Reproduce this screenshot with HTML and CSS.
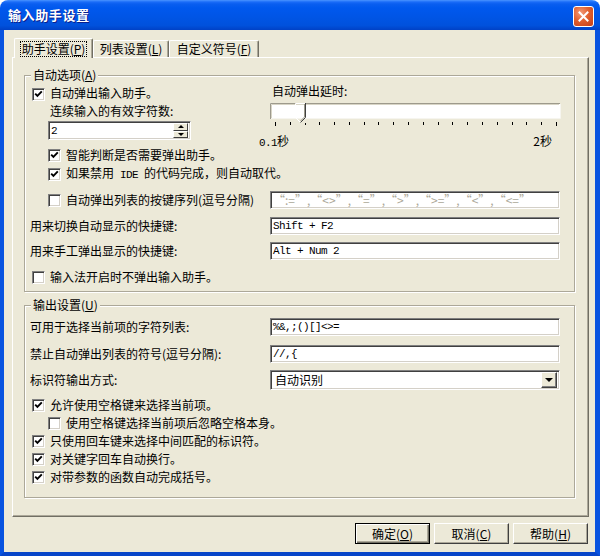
FILE: index.html
```html
<!DOCTYPE html>
<html lang="zh-CN">
<head>
<meta charset="utf-8">
<title>输入助手设置</title>
<link rel="stylesheet" href="styles.css">
</head>
<body>
<div class="window">
  <div class="titlebar">
    <span class="title">输入助手设置</span>
    <span class="close"><svg width="11" height="11" viewBox="0 0 11 11"><path d="M1.5 1.5 L9.5 9.5 M9.5 1.5 L1.5 9.5" stroke="#fff" stroke-width="2" stroke-linecap="square"/></svg></span>
  </div>
  <div class="frame">
    <div class="tabs">
      <div class="tab tab1 active"><span class="focus">助手设置(<u>P</u>)</span></div>
      <div class="tab tab2">列表设置(<u>L</u>)</div>
      <div class="tab tab3">自定义符号(<u>F</u>)</div>
    </div>
    <div class="panel">
      <div class="group g1">
        <div class="legend">自动选项(<u>A</u>)</div>
        <div class="grid block1">
          <div class="col colleft">
            <div class="cbrow lvl1 first"><span class="cb"><svg class="chk" viewBox="0 0 9 9"><path d="M1.2 3.6 L3.4 5.9 L7.8 1.4"/></svg></span><span class="txt">自动弹出输入助手。</span></div>
            <div class="lbl sub">连续输入的有效字符数:</div>
            <div class="field spin"><span class="mono">2</span><span class="spinbtn"><span class="half"><i class="tri up"></i></span><span class="half"><i class="tri down"></i></span></span></div>
          </div>
          <div class="col">
            <div class="lbl delay">自动弹出延时:</div>
            <svg class="slider" width="291" height="26" viewBox="0 0 291 26">
              <rect x="0" y="1" width="290" height="16" fill="#fff"/>
              <path d="M0.5 17 V1.5 H290" stroke="#9d9a8c" fill="none"/>
              <path d="M1.5 16 V2.5 H289" stroke="#d8d5c6" fill="none"/>
              <path d="M1 16.5 H290.5 V2" stroke="#f6f5ef" fill="none"/>
              <path d="M25.5 15.5 V1.5 H35" stroke="#ffffff" fill="none"/>
              <path d="M25.5 15.5 L30.5 20.5" stroke="#ffffff" fill="none"/>
              <path d="M35.5 1 V15.5 L30.5 20.5" stroke="#404040" fill="none"/>
              <path d="M34.5 2 V15 L30.5 19" stroke="#9d9a8c" fill="none"/>
              <path d="M5.5 20 v4 M20.5 20 v3 M35.5 21 v2 M49.5 20 v3 M64.5 20 v3 M79.5 20 v3 M94.5 20 v3 M108.5 20 v3 M123.5 20 v3 M138.5 20 v3 M153.5 20 v3 M168.5 20 v3 M182.5 20 v3 M197.5 20 v3 M212.5 20 v3 M227.5 20 v3 M242.5 20 v3 M256.5 20 v3 M271.5 20 v3 M286.5 20 v4" stroke="#000" fill="none"/>
            </svg>
            <div class="sliderlabels"><span><span class="mono">0.1</span>秒</span><span>2秒</span></div>
          </div>
        </div>
        <div class="cbrow lvl2 r-smart"><span class="cb"><svg class="chk" viewBox="0 0 9 9"><path d="M1.2 3.6 L3.4 5.9 L7.8 1.4"/></svg></span><span>智能判断是否需要弹出助手。</span></div>
        <div class="cbrow lvl2 r-ide"><span class="cb"><svg class="chk" viewBox="0 0 9 9"><path d="M1.2 3.6 L3.4 5.9 L7.8 1.4"/></svg></span><span>如果禁用<span class="mono"> IDE </span>的代码完成，则自动取代。</span></div>
        <div class="grid row r-keys">
          <div class="cbrow lvl2"><span class="cb"></span><span>自动弹出列表的按键序列(逗号分隔)</span></div>
          <div class="field dis">“:=”,“&lt;&gt;”,“=”,“&gt;”,“&gt;=”,“&lt;”,“&lt;=”</div>
        </div>
        <div class="grid row r-sw">
          <div class="lbl lead">用来切换自动显示的快捷键:</div>
          <div class="field"><span class="mono">Shift + F2</span></div>
        </div>
        <div class="grid row r-man">
          <div class="lbl lead">用来手工弹出显示的快捷键:</div>
          <div class="field"><span class="mono">Alt + Num 2</span></div>
        </div>
        <div class="cbrow lvl1 r-ime"><span class="cb"></span><span>输入法开启时不弹出输入助手。</span></div>
      </div>

      <div class="group g2">
        <div class="legend">输出设置(<u>U</u>)</div>
        <div class="grid row r-a">
          <div class="lbl lead">可用于选择当前项的字符列表:</div>
          <div class="field"><span class="mono">%&amp;,;()[]&lt;&gt;=</span></div>
        </div>
        <div class="grid row r-b">
          <div class="lbl lead">禁止自动弹出列表的符号(逗号分隔):</div>
          <div class="field"><span class="mono">//,{</span></div>
        </div>
        <div class="grid row r-c">
          <div class="lbl lead">标识符输出方式:</div>
          <div class="field combo"><span class="combotext">自动识别</span><span class="ddbtn"><i class="tri down big"></i></span></div>
        </div>
        <div class="cblist">
          <div class="cbrow tall lvl1"><span class="cb"><svg class="chk" viewBox="0 0 9 9"><path d="M1.2 3.6 L3.4 5.9 L7.8 1.4"/></svg></span><span>允许使用空格键来选择当前项。</span></div>
          <div class="cbrow tall lvl2"><span class="cb"></span><span>使用空格键选择当前项后忽略空格本身。</span></div>
          <div class="cbrow tall lvl1"><span class="cb"><svg class="chk" viewBox="0 0 9 9"><path d="M1.2 3.6 L3.4 5.9 L7.8 1.4"/></svg></span><span>只使用回车键来选择中间匹配的标识符。</span></div>
          <div class="cbrow tall lvl1"><span class="cb"><svg class="chk" viewBox="0 0 9 9"><path d="M1.2 3.6 L3.4 5.9 L7.8 1.4"/></svg></span><span>对关键字回车自动换行。</span></div>
          <div class="cbrow tall lvl1"><span class="cb"><svg class="chk" viewBox="0 0 9 9"><path d="M1.2 3.6 L3.4 5.9 L7.8 1.4"/></svg></span><span>对带参数的函数自动完成括号。</span></div>
        </div>
      </div>
    </div>
    <div class="buttons">
      <div class="btn default">确定(<u>O</u>)</div>
      <div class="btn">取消(<u>C</u>)</div>
      <div class="btn">帮助(<u>H</u>)</div>
    </div>
  </div>
</div>
</body>
</html>
```

FILE: styles.css
```css
* { box-sizing: border-box; }
html, body { margin: 0; padding: 0; }
body {
  background: #ffffff;
  font-family: "Noto Sans CJK SC", "Noto Sans CJK JP", sans-serif;
  font-size: 12px;
  color: #000;
}
u { text-decoration: underline; text-underline-offset: 1px; }

.window { width: 600px; height: 556px; display: flex; flex-direction: column; }

.titlebar {
  height: 30px;
  flex: none;
  border-radius: 8px 8px 0 0;
  background: linear-gradient(#4a94ff 0, #1a6cf8 2px, #0a5ef0 4px, #0058ee 8px, #0055e6 55%, #0051dc 85%, #0041c6 100%);
  display: flex;
  align-items: center;
  justify-content: space-between;
  padding: 0 6px 0 8px;
}
.title {
  color: #fff;
  font-weight: 700;
  font-size: 13px;
  letter-spacing: 0.6px;
  line-height: 16px;
  text-shadow: 1px 1px 0 #0a1e8c;
}
.close {
  width: 21px;
  height: 21px;
  margin-top: 3px;
  border: 1px solid #fff;
  border-radius: 3px;
  background: radial-gradient(circle at 35% 30%, #f29a78 0, #e1602f 45%, #c43d16 100%);
  display: flex;
  align-items: center;
  justify-content: center;
}

.frame {
  flex: 1;
  background: #ece9d8;
  border-left: 4px solid #0853e0;
  border-right: 5px solid #0853e0;
  border-bottom: 4px solid #0745c9;
  display: flex;
  flex-direction: column;
}

.tabs {
  height: 27px;
  flex: none;
  display: flex;
  align-items: flex-end;
  padding-left: 10px;
}
.tab {
  height: 17px;
  border-top: 1px solid #fff;
  border-left: 1px solid #fff;
  border-right: 1px solid #716f64;
  box-shadow: inset -1px 0 0 #aca899;
  border-radius: 2px 2px 0 0;
  display: flex;
  align-items: center;
  justify-content: center;
  line-height: 14px;
  white-space: nowrap;
  background: #ece9d8;
}
.tab1 { width: 79px; }
.tab2 { width: 76px; }
.tab3 { width: 90px; }
.tab.active {
  height: 20px;
  margin-bottom: -1px;
  position: relative;
  z-index: 1;
}
.focus { outline: 1px dotted #000; padding: 0 1px; line-height: 14px; }

.panel {
  flex: none;
  margin-left: 8px;
  width: 577px;
  height: 460px;
  border: 1px solid;
  border-color: #fff #716f64 #716f64 #fff;
  box-shadow: inset -1px -1px 0 #aca899;
  padding-top: 17px;
}

.group {
  position: relative;
  margin-left: 11px;
  width: 551px;
  border: 1px solid #aca899;
  box-shadow: inset 1px 1px 0 #fff, 1px 1px 0 #fff;
}
.g1 { height: 217px; }
.g2 { height: 193px; margin-top: 13px; }
.legend {
  position: absolute;
  top: -8px;
  left: 6px;
  padding: 0 2px;
  background: #ece9d8;
  line-height: 14px;
  white-space: nowrap;
}

.grid { display: grid; grid-template-columns: 245px 290px; align-items: center; }
.block1 { margin-top: 8px; align-items: start; }
.colleft { padding-top: 3px; }

.lbl { height: 14px; line-height: 14px; white-space: nowrap; }
.sub { padding-left: 25px; height: 19px; line-height: 19px; }
.lead { padding-left: 5px; }
.delay { padding-left: 2px; }

.cbrow { display: flex; align-items: center; height: 14px; line-height: 14px; white-space: nowrap; }
.cbrow.tall { height: 18px; }
.cbrow.first { align-items: flex-start; }
.cbrow.first .cb { margin-top: 1px; }
.cbrow.first .txt { line-height: 12px; }
.lvl1 { padding-left: 7px; }
.lvl2 { padding-left: 23px; }
.cb {
  flex: none;
  width: 13px;
  height: 13px;
  margin-right: 5px;
  background: #fff;
  border: 1px solid;
  border-color: #808080 #fff #fff #808080;
  box-shadow: inset 1px 1px 0 #404040, inset -1px -1px 0 #d4d0c8;
  display: flex;
  align-items: center;
  justify-content: center;
}
.chk { width: 9px; height: 9px; display: block; }
.chk path { fill: none; stroke: #000; stroke-width: 1.9; }

.field {
  height: 18px;
  background: #fff;
  border: 1px solid;
  border-color: #808080 #fff #fff #808080;
  box-shadow: inset 1px 1px 0 #404040, inset -1px -1px 0 #d4d0c8;
  padding: 0 2px;
  display: flex;
  align-items: center;
  white-space: nowrap;
  overflow: hidden;
  line-height: 14px;
}
.dis { color: #aca899; }
.mono { font-family: "Liberation Mono", "DejaVu Sans Mono", monospace; font-size: 11px; letter-spacing: -0.6px; }

.spin {
  margin-top: 1px;
  margin-left: 23px;
  width: 143px;
  height: 19px;
  justify-content: space-between;
  padding: 2px 2px 2px 2px;
}
.spinbtn { width: 15px; height: 15px; display: flex; flex-direction: column; }
.half {
  flex: 1;
  background: #ece9d8;
  border: 1px solid;
  border-color: #fff #404040 #404040 #fff;
  display: flex;
  align-items: center;
  justify-content: center;
}
.tri { display: block; width: 0; height: 0; border-left: 3px solid transparent; border-right: 3px solid transparent; }
.tri.up { border-bottom: 3px solid #000; }
.tri.down { border-top: 3px solid #000; }
.tri.big { border-left-width: 4px; border-right-width: 4px; border-top-width: 4px; }

.slider { display: block; margin-top: 4px; }
.sliderlabels {
  display: flex;
  justify-content: space-between;
  margin-top: 6px;
  margin-left: -11px;
  margin-right: 8px;
  height: 14px;
  line-height: 14px;
}

.r-smart { margin-top: 0; }
.r-ide { margin-top: 5px; }
.r-keys { margin-top: 10px; }
.r-sw { margin-top: 8px; }
.r-man { margin-top: 7px; }
.r-ime { margin-top: 10px; }

.r-a { margin-top: 12px; }
.r-b { margin-top: 9px; }
.r-c { margin-top: 7px; }
.combo { height: 20px; justify-content: space-between; padding: 0 2px 0 4px; }
.ddbtn {
  width: 16px;
  height: 16px;
  background: #ece9d8;
  border: 1px solid;
  border-color: #fff #404040 #404040 #fff;
  box-shadow: inset -1px -1px 0 #808080;
  display: flex;
  align-items: center;
  justify-content: center;
}
.cblist { margin-top: 6px; }

.buttons {
  display: flex;
  justify-content: flex-end;
  gap: 4px;
  padding-right: 7px;
  margin-top: 6px;
}
.btn {
  width: 75px;
  height: 21px;
  background: #ece9d8;
  border: 1px solid;
  border-color: #fff #404040 #404040 #fff;
  box-shadow: inset -1px -1px 0 #aca899;
  display: flex;
  align-items: center;
  justify-content: center;
  line-height: 14px;
  white-space: nowrap;
}
.btn.default {
  border-color: #000;
  box-shadow: inset 1px 1px 0 #fff, inset -1px -1px 0 #716f64, inset -2px -2px 0 #aca899;
}
```
